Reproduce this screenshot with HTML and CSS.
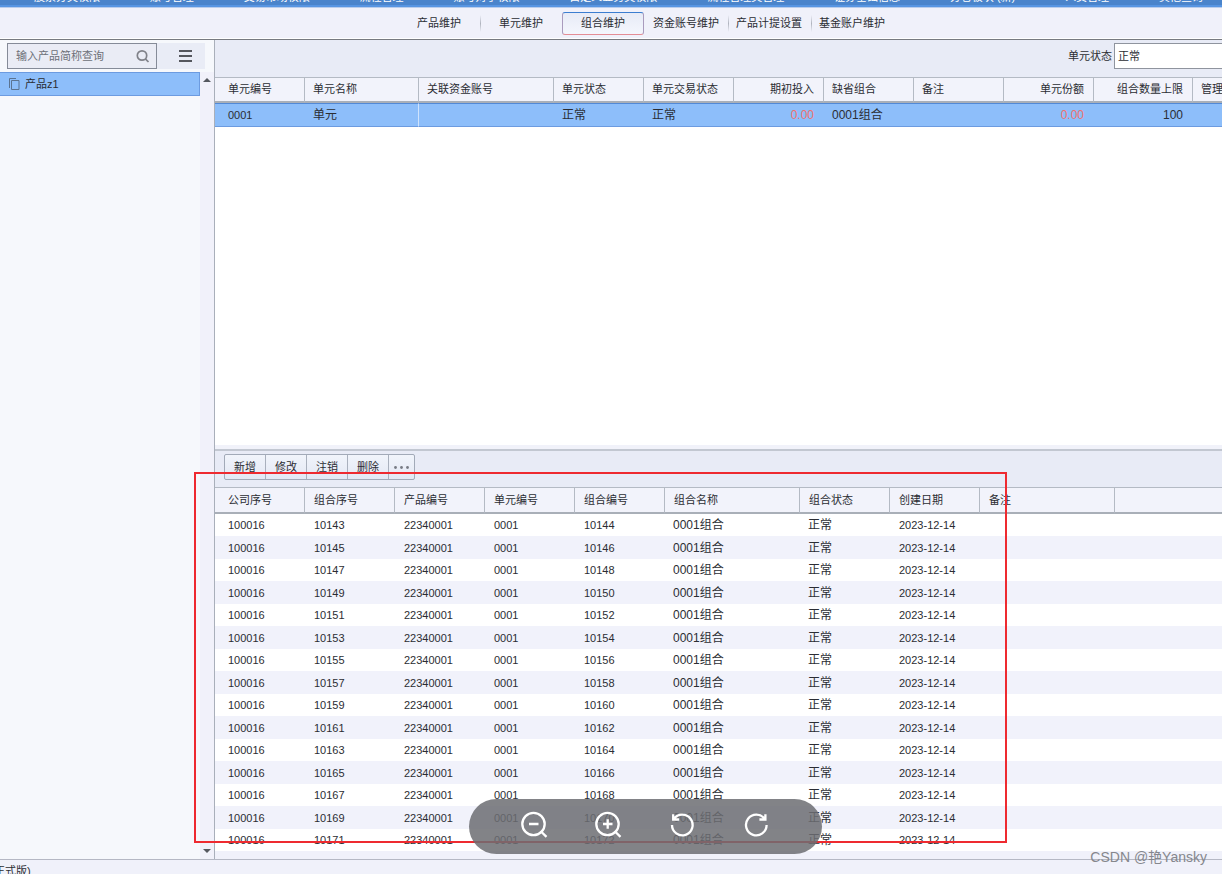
FILE: index.html
```
<!DOCTYPE html>
<html lang="zh-CN">
<head>
<meta charset="utf-8">
<title>组合维护</title>
<link rel="stylesheet" href="styles.css">
</head>
<body>
<div class="app">
  <header class="menubar">
    <a href="#">股票分类权限</a><a href="#">账号管理</a><a href="#">交易市场权限</a><a href="#">流程管理</a><a href="#">账号对手权限</a><a href="#">自定义业务类权限</a><a href="#">流程管理类管理</a><a href="#">证券基础信息</a><a href="#">分仓板块 (新)</a><a href="#">人员管理</a><a href="#">其他查询</a>
  </header>

  <nav class="tabs">
    <button class="tab">产品维护</button>
    <button class="tab split">单元维护</button>
    <button class="tab active">组合维护</button>
    <button class="tab">资金账号维护</button>
    <button class="tab split">产品计提设置</button>
    <button class="tab split">基金账户维护</button>
  </nav>

  <main class="body">
    <aside class="side">
      <div class="side-top">
        <div class="search">
          <input type="text" aria-label="产品查询" placeholder="输入产品简称查询">
          <svg width="14" height="14" viewBox="0 0 14 14" fill="none" stroke="#808289" stroke-width="1.7"><circle cx="6" cy="6.5" r="4.7"/><path d="M9.3 9.8L12.5 13"/></svg>
        </div>
        <button class="menu-btn" aria-label="菜单"><svg width="14" height="12" viewBox="0 0 14 12"><path d="M0 1h13M0 6h13M0 11h13" stroke="#55575e" stroke-width="2"/></svg></button>
      </div>
      <div class="side-main">
        <div class="tree">
          <a class="tree-item" href="#"><svg width="11" height="12" viewBox="0 0 11 12" fill="none" stroke="#5b7391"><path d="M.5 10V.5H7"/><path d="M2.5 2.5h7.5v9H2.5z"/></svg>产品z1</a>
        </div>
        <div class="scroll">
          <svg width="8" height="4" viewBox="0 0 8 4"><path d="M0 4L4 0l4 4z" fill="#55585f"/></svg>
          <svg width="8" height="4" viewBox="0 0 8 4"><path d="M0 0h8L4 4z" fill="#55585f"/></svg>
        </div>
      </div>
    </aside>

    <section class="content">
      <div class="filter">
        <label for="state">单元状态</label>
        <select id="state"><option>正常</option></select>
      </div>
      <div class="upper">
        <table class="grid units">
          <colgroup><col class="w90"><col class="w114"><col class="w135"><col class="w90"><col class="w90"><col class="w90"><col class="w90"><col class="w90"><col class="w90"><col class="w99"><col></colgroup>
          <thead><tr><th>单元编号</th><th>单元名称</th><th>关联资金账号</th><th>单元状态</th><th>单元交易状态</th><th class="num">期初投入</th><th>缺省组合</th><th>备注</th><th class="num">单元份额</th><th class="num">组合数量上限</th><th>管理人</th></tr></thead>
          <tbody><tr><td>0001</td><td class="big mark">单元</td><td></td><td class="big">正常</td><td class="big">正常</td><td class="big num red">0.00</td><td class="big">0001组合</td><td></td><td class="big num red">0.00</td><td class="big num">100</td><td></td></tr></tbody>
        </table>
      </div>
      <div class="toolbar">
        <div class="group">
          <button>新增</button><button>修改</button><button>注销</button><button>删除</button><button aria-label="更多"><svg width="15" height="3" viewBox="0 0 15 3" fill="#777b84"><circle cx="1.5" cy="1.5" r="1.4"/><circle cx="7.5" cy="1.5" r="1.4"/><circle cx="13.5" cy="1.5" r="1.4"/></svg></button>
        </div>
      </div>
      <div class="lower">
        <table class="grid combos">
          <colgroup><col class="w90"><col class="w90"><col class="w90"><col class="w90"><col class="w90"><col class="w135"><col class="w90"><col class="w90"><col class="w135"><col></colgroup>
          <thead><tr><th>公司序号</th><th>组合序号</th><th>产品编号</th><th>单元编号</th><th>组合编号</th><th>组合名称</th><th>组合状态</th><th>创建日期</th><th>备注</th><th></th></tr></thead>
          <tbody>
            <tr><td>100016</td><td>10143</td><td>22340001</td><td>0001</td><td>10144</td><td class="big">0001组合</td><td class="big">正常</td><td>2023-12-14</td><td></td><td></td></tr>
            <tr><td>100016</td><td>10145</td><td>22340001</td><td>0001</td><td>10146</td><td class="big">0001组合</td><td class="big">正常</td><td>2023-12-14</td><td></td><td></td></tr>
            <tr><td>100016</td><td>10147</td><td>22340001</td><td>0001</td><td>10148</td><td class="big">0001组合</td><td class="big">正常</td><td>2023-12-14</td><td></td><td></td></tr>
            <tr><td>100016</td><td>10149</td><td>22340001</td><td>0001</td><td>10150</td><td class="big">0001组合</td><td class="big">正常</td><td>2023-12-14</td><td></td><td></td></tr>
            <tr><td>100016</td><td>10151</td><td>22340001</td><td>0001</td><td>10152</td><td class="big">0001组合</td><td class="big">正常</td><td>2023-12-14</td><td></td><td></td></tr>
            <tr><td>100016</td><td>10153</td><td>22340001</td><td>0001</td><td>10154</td><td class="big">0001组合</td><td class="big">正常</td><td>2023-12-14</td><td></td><td></td></tr>
            <tr><td>100016</td><td>10155</td><td>22340001</td><td>0001</td><td>10156</td><td class="big">0001组合</td><td class="big">正常</td><td>2023-12-14</td><td></td><td></td></tr>
            <tr><td>100016</td><td>10157</td><td>22340001</td><td>0001</td><td>10158</td><td class="big">0001组合</td><td class="big">正常</td><td>2023-12-14</td><td></td><td></td></tr>
            <tr><td>100016</td><td>10159</td><td>22340001</td><td>0001</td><td>10160</td><td class="big">0001组合</td><td class="big">正常</td><td>2023-12-14</td><td></td><td></td></tr>
            <tr><td>100016</td><td>10161</td><td>22340001</td><td>0001</td><td>10162</td><td class="big">0001组合</td><td class="big">正常</td><td>2023-12-14</td><td></td><td></td></tr>
            <tr><td>100016</td><td>10163</td><td>22340001</td><td>0001</td><td>10164</td><td class="big">0001组合</td><td class="big">正常</td><td>2023-12-14</td><td></td><td></td></tr>
            <tr><td>100016</td><td>10165</td><td>22340001</td><td>0001</td><td>10166</td><td class="big">0001组合</td><td class="big">正常</td><td>2023-12-14</td><td></td><td></td></tr>
            <tr><td>100016</td><td>10167</td><td>22340001</td><td>0001</td><td>10168</td><td class="big">0001组合</td><td class="big">正常</td><td>2023-12-14</td><td></td><td></td></tr>
            <tr><td>100016</td><td>10169</td><td>22340001</td><td>0001</td><td>10170</td><td class="big">0001组合</td><td class="big">正常</td><td>2023-12-14</td><td></td><td></td></tr>
            <tr><td>100016</td><td>10171</td><td>22340001</td><td>0001</td><td>10172</td><td class="big">0001组合</td><td class="big">正常</td><td>2023-12-14</td><td></td><td></td></tr>
          </tbody>
        </table>
      </div>
    </section>
  </main>

  <footer class="status">正式版)</footer>

  <div class="highlight"></div>
  <div class="viewer">
    <button aria-label="缩小"><svg width="28" height="28" viewBox="0 0 28 28"><circle cx="13.5" cy="13" r="11.2"/><path d="M9 13h9.5M20.5 20l6 5.8"/></svg></button>
    <button aria-label="放大"><svg width="28" height="28" viewBox="0 0 28 28"><circle cx="13.5" cy="13" r="11.2"/><path d="M9 13h9.5M13.7 8.3v9.5M20.5 20l6 5.8"/></svg></button>
    <button aria-label="向左旋转"><svg width="28" height="28" viewBox="0 0 28 28"><path d="M4 14A10.3 10.3 0 1 0 5.8 8.2M5.2 3.2v5.3h6"/></svg></button>
    <button aria-label="向右旋转"><svg width="28" height="28" viewBox="0 0 28 28"><path d="M24.6 14A10.3 10.3 0 1 1 22.8 8.2M23.4 3.2v5.3h-6"/></svg></button>
  </div>
  <div class="watermark">CSDN @艳Yansky</div>
</div>
</body>
</html>
```
FILE: styles.css
```
* { box-sizing: border-box; }
body {
  margin: 0;
  font: 11px/16px "Liberation Sans", "Noto Sans CJK SC", sans-serif;
  color: #2b2d33;
}
button, input, select { font: inherit; color: inherit; margin: 0; }
button { border: 0; background: none; padding: 0; }
a { color: inherit; text-decoration: none; }
svg { display: block; flex: none; }

.app {
  position: relative;
  display: flex;
  flex-direction: column;
  height: 100vh;
  overflow: hidden;
  background: #f0f1fa;
}

/* top menu, scrolled so that only its lower edge shows */
.menubar {
  flex: none;
  display: flex;
  align-items: flex-end;
  justify-content: space-between;
  height: 8px;
  padding: 0 19px 4px 34px;
  overflow: hidden;
  white-space: nowrap;
  color: #fff;
  background: linear-gradient(#4a84cb 5px, #5795e2 5px, #5795e2 7px, #b9cdec 7px);
}
.menubar a { line-height: 13px; }

.tabs {
  flex: none;
  display: flex;
  height: 32px;
  padding: 4px 0 4px 398px;
  border-bottom: 1px solid #777a80;
  box-shadow: inset 0 -1px #fff;
}
.tab {
  position: relative;
  width: 82px;
  height: 23px;
  padding-bottom: 2px;
  white-space: nowrap;
}
.tab:nth-child(n+3) { margin-right: 1px; }
.tab.split::before {
  content: "";
  position: absolute;
  left: 0;
  top: 3px;
  width: 1px;
  height: 17px;
  background: linear-gradient(transparent, #b0b4be, transparent);
}
.tab.active {
  border: 1px solid;
  border-color: #3b7dd0 #a99bbd #e48d95;
  border-radius: 3px;
  background: linear-gradient(#e7ebf6, #f4f6fd);
}

.body { flex: 1; min-height: 0; display: flex; }

.side {
  flex: none;
  width: 215px;
  display: flex;
  flex-direction: column;
  border-right: 1px solid #a9afba;
  background: #f6f8fc;
}
.side-top { display: flex; padding: 3px 9px 3px 7px; }
.search {
  display: flex;
  align-items: center;
  width: 150px;
  height: 26px;
  padding: 0 6px 0 8px;
  border: 1px solid #858b98;
  background: #eaecf5;
}
.search input {
  flex: 1;
  min-width: 0;
  padding: 0;
  border: 0;
  outline: 0;
  background: none;
}
.search input::placeholder { color: #6d7078; opacity: 1; }
.menu-btn { flex: 1; display: flex; align-items: center; justify-content: center; padding-left: 10px; background: #e9ecf6; }
.side-main { flex: 1; display: flex; }
.tree { flex: 1; }
.tree-item {
  display: flex;
  align-items: center;
  gap: 5px;
  height: 24px;
  padding-left: 9px;
  border: 1px solid #6c9be0;
  border-left: 0;
  background: #8dbefa;
}
.scroll {
  width: 14px;
  display: flex;
  flex-direction: column;
  justify-content: space-between;
  align-items: center;
  padding: 6px 0;
  background: #f1f1fa;
}

.content { flex: 1; min-width: 0; display: flex; flex-direction: column; overflow: hidden; }
.filter {
  flex: none;
  display: flex;
  align-items: center;
  justify-content: flex-end;
  gap: 2px;
  height: 37px;
  padding-bottom: 5px;
  background: #e8ebf6;
}
.filter select {
  appearance: none;
  width: 160px;
  height: 26px;
  margin-right: -52px;
  padding: 0 3px;
  border: 1px solid #8f949e;
  border-radius: 0;
  background: #fff;
}

.upper { flex: 1; min-height: 0; overflow: hidden; background: #fff; border-bottom: 4px solid #f1f2fa; }
.lower { flex: none; padding-bottom: 8px; }

.grid { width: 100%; table-layout: fixed; border-collapse: separate; border-spacing: 0; }
.w90 { width: 90px; }
.w99 { width: 99px; }
.w114 { width: 114px; }
.w135 { width: 135px; }
.grid th, .grid td {
  padding: 0 10px 0 9px;
  font-weight: 400;
  text-align: left;
  white-space: nowrap;
  overflow: hidden;
}
.grid td.big, .units th { padding-left: 8px; }
.grid th {
  height: 26px;
  padding-right: 9px;
  padding-bottom: 1px;
  border-right: 1px solid #b4bac4;
  border-top: 1px solid #b4bac4;
  border-bottom: 2px solid #a9afb8;
  background: #f2f3fb;
}
.grid th:last-child { border-right: 0; padding-right: 0; }
.grid th:first-child, .grid td:first-child { padding-left: 13px; }
.grid .num { text-align: right; }
.grid .big { font-size: 12px; }
.grid .red { color: #f0716e; }
.units td {
  height: 24px;
  border-top: 1px solid #5289d6;
  border-bottom: 1px solid #6c9be0;
  background: #8dbefa;
}
.units .mark { border-right: 1px solid #cfe3fd; }
.combos th { height: 27px; }
.combos td { height: 22px; background: #fff; }
.combos tr:nth-child(even) td { height: 23px; background: #f1f2fb; }

.toolbar {
  flex: none;
  height: 38px;
  padding: 3px 9px 0;
  border-top: 2px solid #c2c7d1;
  background: #e8ebf6;
}
.group {
  display: inline-flex;
  height: 26px;
  border: 1px solid #a2aab8;
  border-radius: 2px;
  background: linear-gradient(#f1f4fb, #e3e8f4);
}
.group button { width: 41px; display: flex; align-items: center; justify-content: center; border-right: 1px solid #a9b0bd; }
.group button:last-child { width: 25px; border: 0; }

.status {
  flex: none;
  height: 15px;
  padding-top: 3px;
  border-top: 1px solid #b5b8c4;
  text-indent: -6px;
  white-space: nowrap;
  overflow: hidden;
}

/* overlays on top of the application */
.highlight {
  position: absolute;
  left: 194px;
  top: 472px;
  width: 813px;
  height: 371px;
  border: 2px solid #ee2a30;
  pointer-events: none;
}
.viewer {
  position: absolute;
  left: 469px;
  bottom: 20px;
  display: flex;
  gap: 46px;
  width: 353px;
  height: 55px;
  padding: 12px 0 0 51px;
  border-radius: 28px;
  background: rgba(108, 109, 114, .85);
}
.viewer button { width: 28px; height: 28px; }
.viewer svg { fill: none; stroke: #fff; stroke-width: 2.3; }
.watermark {
  position: absolute;
  right: 15px;
  bottom: 8px;
  font-size: 14px;
  line-height: 18px;
  color: #85878d;
}
```
